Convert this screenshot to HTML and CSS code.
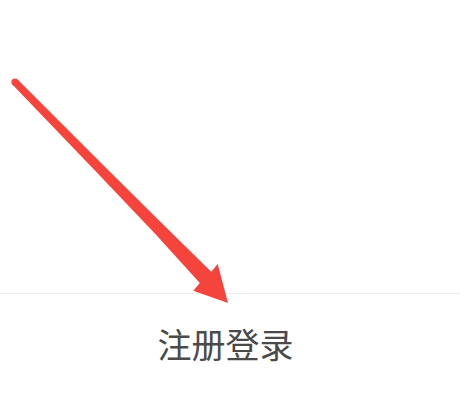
FILE: index.html
```html
<!DOCTYPE html>
<html lang="zh-CN">
<head>
<meta charset="utf-8">
<link rel="stylesheet" href="styles.css">
</head>
<body>
<div class="page">
  <div class="top"></div>
  <div class="divider"></div>
  <div class="login">注册登录</div>
  <svg class="arrow" width="460" height="396" viewBox="0 0 460 396" xmlns="http://www.w3.org/2000/svg">
    <circle cx="15" cy="82" r="3.6" fill="#f5443b"/>
    <polygon fill="#f5443b" points="17.6,79.5 104.6,166.6 164.4,225.7 211.2,271.8 217.7,264 228,303 193.3,290.7 199.8,283 155.6,234.3 97.8,173.4 12.4,84.5"/>
  </svg>
</div>
</body>
</html>
```
FILE: styles.css
```css
html, body {
  margin: 0;
  padding: 0;
  background: #ffffff;
}
.page {
  position: relative;
  width: 460px;
  height: 396px;
  overflow: hidden;
  display: flex;
  flex-direction: column;
}
.top {
  height: 293px;
}
.divider {
  height: 1px;
  background: #ececec;
}
.login {
  flex: 1;
  display: flex;
  align-items: center;
  justify-content: center;
  padding: 0 9px 4px 0;
  font-family: "Noto Sans CJK SC", "Noto Sans", sans-serif;
  font-size: 34px;
  color: #4a4a4a;
}
.arrow {
  position: absolute;
  left: 0;
  top: 0;
}
```
